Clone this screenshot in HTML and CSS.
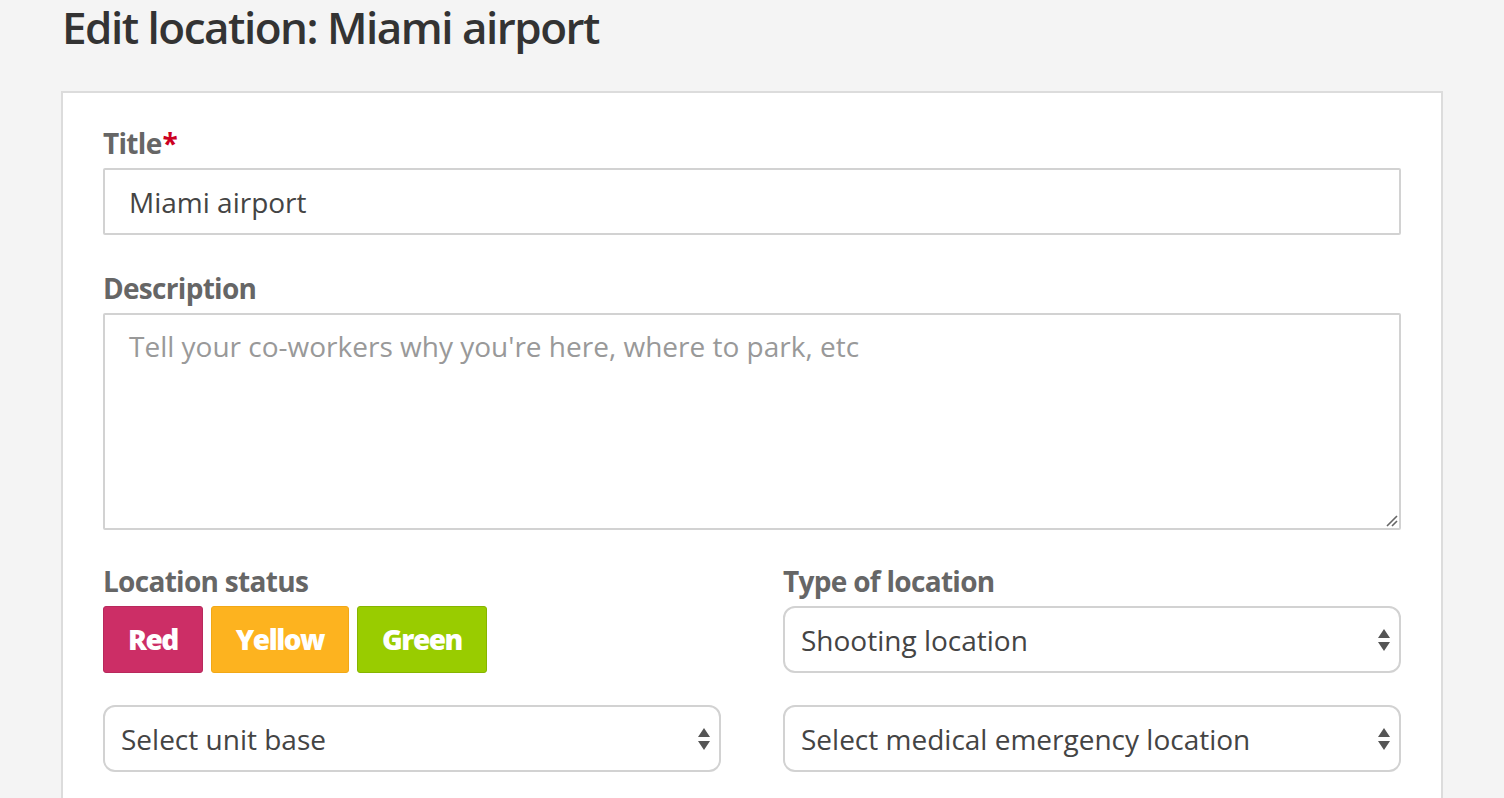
FILE: index.html
```html
<!DOCTYPE html>
<html>
<head>
<meta charset="utf-8">
<link rel="stylesheet" href="styles.css">
</head>
<body>
<div class="page">
  <h1 class="page-title">Edit location: Miami airport</h1>
  <div class="card">
    <div class="field">
      <label class="label">Title<span class="req">*</span></label>
      <div class="input">Miami airport</div>
    </div>
    <div class="field field-desc">
      <label class="label">Description</label>
      <div class="textarea">
        <span class="placeholder">Tell your co-workers why you're here, where to park, etc</span>
        <svg class="grip" width="14" height="14" viewBox="0 0 14 14"><path d="M13 3 L3 13 M13 8 L8 13" stroke="#666" stroke-width="1.6" fill="none"/></svg>
      </div>
    </div>
    <div class="row">
      <div class="col">
        <label class="label">Location status</label>
        <div class="status-group">
          <span class="status red">Red</span>
          <span class="status yellow">Yellow</span>
          <span class="status green">Green</span>
        </div>
      </div>
      <div class="col">
        <label class="label">Type of location</label>
        <div class="select"><span>Shooting location</span><svg class="arrows" width="14" height="26" viewBox="0 0 14 26"><path d="M7 2 L13 11 L1 11 Z M1 15 L13 15 L7 24 Z" fill="#555"/></svg></div>
      </div>
    </div>
    <div class="row row2">
      <div class="col">
        <div class="select"><span>Select unit base</span><svg class="arrows" width="14" height="26" viewBox="0 0 14 26"><path d="M7 2 L13 11 L1 11 Z M1 15 L13 15 L7 24 Z" fill="#555"/></svg></div>
      </div>
      <div class="col">
        <div class="select"><span>Select medical emergency location</span><svg class="arrows" width="14" height="26" viewBox="0 0 14 26"><path d="M7 2 L13 11 L1 11 Z M1 15 L13 15 L7 24 Z" fill="#555"/></svg></div>
      </div>
    </div>
  </div>
</div>
</body>
</html>
```

FILE: styles.css
```css
html, body {
  margin: 0;
  padding: 0;
  background: #f4f4f4;
  font-family: "Open Sans", "Liberation Sans", sans-serif;
  overflow: hidden;
}
.page {
  padding: 0 61px;
}
.page-title {
  margin: 0;
  padding-top: 0;
  height: 91px;
  line-height: 54px;
  font-size: 44px;
  font-weight: 600;
  color: #333;
  letter-spacing: -1.5px;
  padding-left: 1px;
}
.card {
  background: #fff;
  border: 2px solid #dcdcdc;
  border-bottom: none;
  padding: 30px 40px 40px;
  width: 1298px;
  min-height: 800px;
}
.field {
  margin-bottom: 33px;
}
.field-desc {
  margin-bottom: 31px;
}
.label {
  display: block;
  font-size: 28px;
  font-weight: 700;
  color: #666;
  letter-spacing: -0.7px;
  line-height: 40px;
  margin-bottom: 5px;
}
.req {
  color: #cc0022;
  margin-left: 1px;
}
.input {
  box-sizing: border-box;
  height: 67px;
  border: 2px solid #d2d2d2;
  border-radius: 2px;
  padding: 0 24px;
  font-size: 28px;
  color: #444;
  line-height: 65px;
}
.textarea {
  position: relative;
  box-sizing: border-box;
  height: 217px;
  border: 2px solid #d2d2d2;
  border-radius: 2px;
  padding: 11px 24px;
  font-size: 28px;
  line-height: 40px;
}
.placeholder {
  color: #999;
}
.grip {
  position: absolute;
  right: 1px;
  bottom: 1px;
}
.row {
  display: flex;
  gap: 62px;
}
.row2 {
  margin-top: 32px;
}
.col {
  flex: 1;
}
.status-group {
  display: flex;
  gap: 8px;
}
.status {
  box-sizing: border-box;
  height: 67px;
  line-height: 65px;
  padding: 0 24px;
  font-size: 28px;
  font-weight: 800;
  color: #fff;
  letter-spacing: -1.5px;
  border-radius: 3px;
  border: 1px solid transparent;
}
.status.red {
  background: #cc2e66;
  border-color: #b8295c;
}
.status.yellow {
  background: #fdb31f;
  border-color: #f2a816;
}
.status.green {
  background: #99cc00;
  border-color: #86b500;
}
.select {
  box-sizing: border-box;
  height: 67px;
  border: 2px solid #d2d2d2;
  border-radius: 12px;
  padding: 0 8px 0 16px;
  font-size: 28px;
  color: #444;
  display: flex;
  align-items: center;
  justify-content: space-between;
}
```
